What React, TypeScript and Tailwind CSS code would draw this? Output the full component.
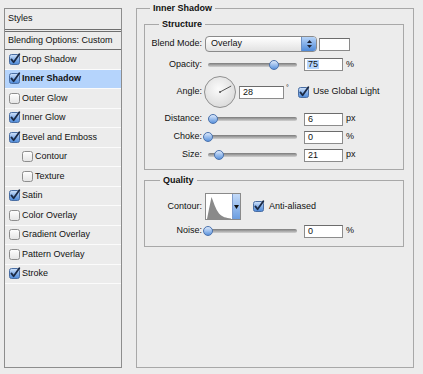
import React from "react";

const Box = ({ checked }: { checked: boolean }) => (
  <svg width="11" height="11" viewBox="0 0 11 11" className="shrink-0 overflow-visible">
    <defs>
      <linearGradient id="cbOn" x1="0" y1="0" x2="0" y2="1">
        <stop offset="0" stopColor="#d2e4fb" />
        <stop offset="0.5" stopColor="#86b0e8" />
        <stop offset="1" stopColor="#4d89d8" />
      </linearGradient>
      <linearGradient id="cbOff" x1="0" y1="0" x2="0" y2="1">
        <stop offset="0" stopColor="#ffffff" />
        <stop offset="1" stopColor="#e4e4e4" />
      </linearGradient>
    </defs>
    <rect
      x="0.5"
      y="0.5"
      width="10"
      height="10"
      rx="2"
      fill={checked ? "url(#cbOn)" : "url(#cbOff)"}
      stroke={checked ? "#4a6ea3" : "#8e8e8e"}
    />
    {checked && (
      <path
        d="M2.4 5.4 L4.6 8.3 L10.3 0.3"
        fill="none"
        stroke="#1b2a45"
        strokeWidth="1.8"
        strokeLinecap="round"
        strokeLinejoin="round"
      />
    )}
  </svg>
);

const items = [
  { l: "Drop Shadow", c: true, sel: false, ind: false },
  { l: "Inner Shadow", c: true, sel: true, ind: false },
  { l: "Outer Glow", c: false, sel: false, ind: false },
  { l: "Inner Glow", c: true, sel: false, ind: false },
  { l: "Bevel and Emboss", c: true, sel: false, ind: false },
  { l: "Contour", c: false, sel: false, ind: true },
  { l: "Texture", c: false, sel: false, ind: true },
  { l: "Satin", c: true, sel: false, ind: false },
  { l: "Color Overlay", c: false, sel: false, ind: false },
  { l: "Gradient Overlay", c: false, sel: false, ind: false },
  { l: "Pattern Overlay", c: false, sel: false, ind: false },
  { l: "Stroke", c: true, sel: false, ind: false },
];

const Slider = ({ pos }: { pos: number }) => (
  <div className="relative ml-[6px] w-[89px] h-[4px] shrink-0 rounded-full bg-linear-to-b from-[#7b7b7b] to-[#d2d2d2]">
    <div
      className="absolute top-1/2 -translate-y-1/2 w-[10px] h-[10px] rounded-full border border-[#4a72ad] bg-linear-to-b from-[#dde9fb] to-[#5b93dc]"
      style={{ left: pos - 5 }}
    />
  </div>
);

const Field = ({ v, sel }: { v: string; sel?: boolean }) => (
  <div className="ml-[7px] w-[39px] h-[13px] shrink-0 border border-[#8c8c8c] border-t-[#6c6c6c] bg-white flex items-center pl-[2px] leading-none">
    {sel ? <span className="bg-[#b5d5fe] px-[1px]">{v}</span> : <span className="px-[1px]">{v}</span>}
  </div>
);

const Label = ({ t }: { t: string }) => <div className="w-[57px] shrink-0 text-right">{t}</div>;

export default function App() {
  return (
    <div className="w-[423px] h-[374px] bg-[#ececec] flex items-start pl-[4px] pt-[2px] font-['Liberation_Sans',Arial,sans-serif] text-[9px] text-[#111]">
      {/* Left list */}
      <div className="mt-[6px] w-[118px] h-[360px] shrink-0 border border-[#8d8d8d] flex flex-col">
        <div className="h-[20px] flex items-center pl-[3px]">Styles</div>
        <div className="h-[3px] border-y border-[#6e6e6e]" />
        <div className="h-[18px] flex items-center pl-[3px] border-b border-[#6e6e6e]">Blending Options: Custom</div>
        {items.map((it) => (
          <div
            key={it.l}
            className={`h-[19.5px] shrink-0 flex items-center border-b border-[#fbfbfb] ${it.ind ? "pl-[17px]" : "pl-[4px]"} ${it.sel ? "bg-[#b5d4fc] font-bold" : ""}`}
          >
            <Box checked={it.c} />
            <span className="ml-[2px]">{it.l}</span>
          </div>
        ))}
      </div>

      {/* Right */}
      <fieldset className="ml-[14px] w-[278px] h-[366px] shrink-0 border border-[#a8a8a8] pl-[7px] pr-[9px]">
        <legend className="ml-[6px] px-[3px] font-bold leading-[12px]">Inner Shadow</legend>

        <fieldset className="mt-[4px] w-[260px] border border-[#a8a8a8] pt-[6px] pb-[7px]">
          <legend className="ml-[14px] px-[3px] font-bold leading-[12px]">Structure</legend>

          <div className="h-[16px] flex items-center">
            <Label t="Blend Mode:" />
            <div className="ml-[3px] w-[112px] h-[16px] rounded-[4px] border border-[#8a8a8a] bg-linear-to-b from-white to-[#e2e2e2] flex items-center overflow-hidden">
              <span className="pl-[5px]">Overlay</span>
              <div className="ml-auto w-[15px] h-full border-l border-[#6d90c4] bg-linear-to-b from-[#b7d4f8] to-[#4f8ad8] flex flex-col items-center justify-center gap-[2px]">
                <svg width="5" height="3" viewBox="0 0 5 3">
                  <path d="M0 3 L2.5 0 L5 3 Z" fill="#1d2233" />
                </svg>
                <svg width="5" height="3" viewBox="0 0 5 3">
                  <path d="M0 0 L2.5 3 L5 0 Z" fill="#1d2233" />
                </svg>
              </div>
            </div>
            <div className="ml-[2px] w-[31px] h-[13px] border border-[#8a8a8a] border-t-[#6c6c6c] bg-white" />
          </div>

          <div className="mt-[5px] h-[15px] flex items-center">
            <Label t="Opacity:" />
            <Slider pos={66} />
            <Field v="75" sel />
            <span className="ml-[3px]">%</span>
          </div>

          <div className="mt-[4px] h-[32px] flex items-center">
            <Label t="Angle:" />
            <svg width="32" height="32" viewBox="0 0 32 32" className="ml-[2px] shrink-0">
              <defs>
                <radialGradient id="dialG" cx="0.45" cy="0.4" r="0.65">
                  <stop offset="0" stopColor="#fbfbfb" />
                  <stop offset="1" stopColor="#d9d9d9" />
                </radialGradient>
              </defs>
              <circle cx="16" cy="16" r="15.5" fill="url(#dialG)" stroke="#909090" />
              <line x1="16" y1="16" x2="27.2" y2="10" stroke="#555" strokeWidth="1" />
              <circle cx="16" cy="16" r="1" fill="#555" />
            </svg>
            <div className="ml-[3px] w-[45px] h-[13px] shrink-0 border border-[#8c8c8c] border-t-[#6c6c6c] bg-white flex items-center pl-[3px] leading-none">
              28
            </div>
            <span className="ml-[2px] w-[6px] self-start mt-[7px] text-[7px]">°</span>
            <div className="ml-[6px] flex items-center">
              <Box checked />
            </div>
            <span className="ml-[4px]">Use Global Light</span>
          </div>

          <div className="mt-[4px] h-[14px] flex items-center">
            <Label t="Distance:" />
            <Slider pos={5} />
            <Field v="6" />
            <span className="ml-[3px]">px</span>
          </div>

          <div className="mt-[4px] h-[14px] flex items-center">
            <Label t="Choke:" />
            <Slider pos={0} />
            <Field v="0" />
            <span className="ml-[3px]">%</span>
          </div>

          <div className="mt-[4px] h-[14px] flex items-center">
            <Label t="Size:" />
            <Slider pos={11} />
            <Field v="21" />
            <span className="ml-[3px]">px</span>
          </div>
        </fieldset>

        <fieldset className="mt-[4px] w-[260px] border border-[#a8a8a8] pt-[7px] pb-[8px]">
          <legend className="ml-[15px] px-[3px] font-bold leading-[12px]">Quality</legend>

          <div className="h-[27px] flex items-center">
            <Label t="Contour:" />
            <div className="ml-[3px] w-[36px] h-[27px] shrink-0 border border-[#8a8a8a] bg-white flex">
              <svg width="26" height="25" viewBox="0 0 26 25" className="shrink-0">
                <path
                  d="M1 25 L3 15 L5.5 3 C7.5 8 9.5 15 13 19.5 C16.5 23 20 24 25 24.5 L25 25 Z"
                  fill="#8a8a8a"
                />
              </svg>
              <div className="ml-auto w-[8px] h-full border-l border-[#7f9ccc] bg-linear-to-b from-[#c4dbf9] to-[#6b9de0] flex items-center justify-center">
                <svg width="5" height="4" viewBox="0 0 5 4">
                  <path d="M0 0 L2.5 4 L5 0 Z" fill="#111" />
                </svg>
              </div>
            </div>
            <div className="ml-[12px] flex items-center">
              <Box checked />
            </div>
            <span className="ml-[5px]">Anti-aliased</span>
          </div>

          <div className="mt-[4px] h-[14px] flex items-center">
            <Label t="Noise:" />
            <Slider pos={0} />
            <Field v="0" />
            <span className="ml-[3px]">%</span>
          </div>
        </fieldset>
      </fieldset>
    </div>
  );
}
